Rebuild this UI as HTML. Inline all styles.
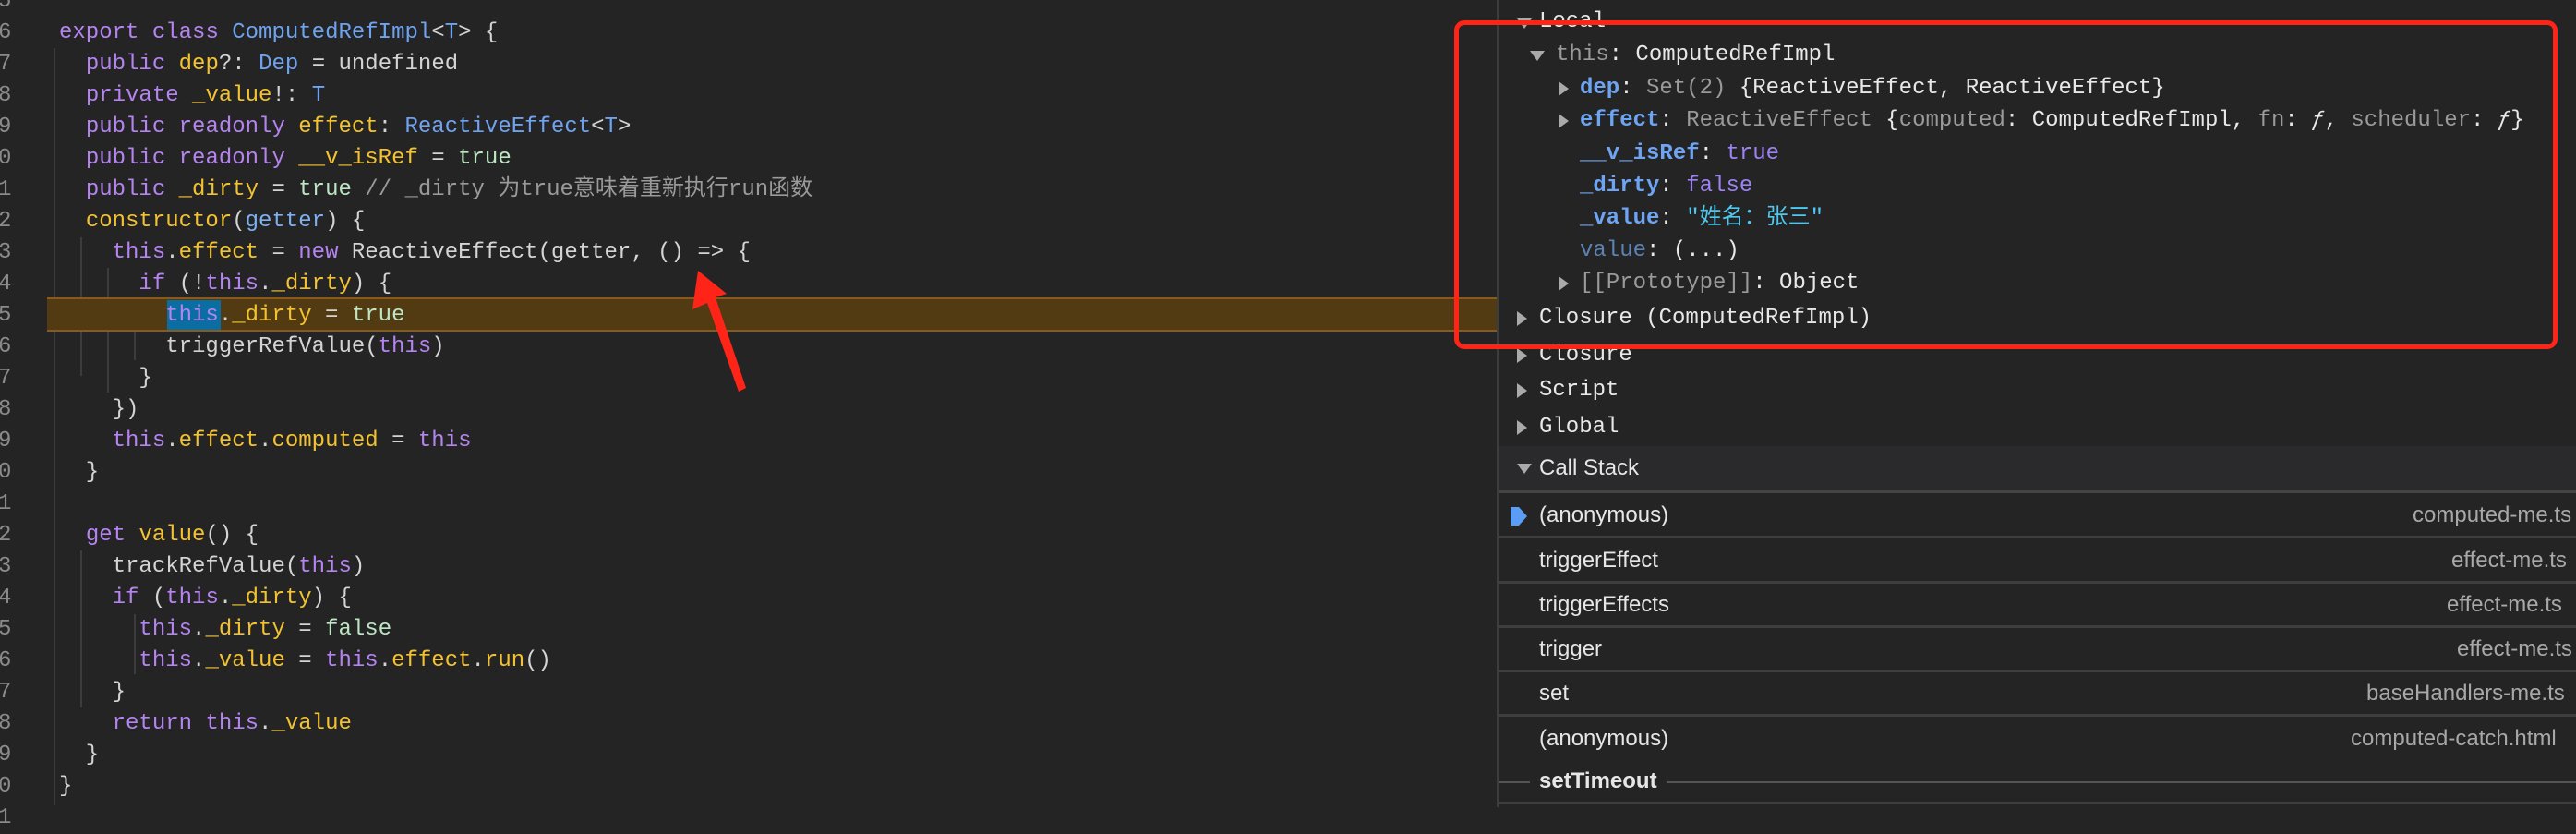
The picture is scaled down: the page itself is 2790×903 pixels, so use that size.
<!DOCTYPE html>
<html><head><meta charset="utf-8">
<style>
html,body{margin:0;padding:0;}
body{width:2790px;height:874px;overflow:hidden;background:#242424;position:relative;font-family:"Liberation Mono","Noto Sans CJK SC",monospace;}
.l{position:absolute;left:64px;white-space:pre;font-size:24px;line-height:34px;color:#d4d4d4;}
.n{position:absolute;left:-2px;width:14px;text-align:right;font-size:24px;line-height:34px;color:#8a8a8a;font-family:"Liberation Mono",monospace;}
.k{color:#b584f0}.c{color:#6fa3f0}.p{color:#f2c233}.g{color:#bde6c4}.cm{color:#9a9a9a}.pa{color:#7fb0f0}
.gd{position:absolute;width:2px;background:#3c3c3c;}
#right{position:absolute;left:1621px;top:0;width:1169px;height:874px;background:#242424;border-left:2px solid #3d3d3d;}
.r{position:absolute;white-space:pre;font-size:24px;line-height:34px;color:#e8e8e8;}
.tri{position:absolute;width:0;height:0;}
.tr{border-top:8px solid transparent;border-bottom:8px solid transparent;border-left:11px solid #aaa;}
.td{border-left:8px solid transparent;border-right:8px solid transparent;border-top:11px solid #aaa;}
.kb{color:#6ea4f2;font-weight:bold}.gr{color:#9a9a9a}.pu{color:#9d83f2}.cy{color:#4fc8f0}.dv{color:#5d82b4}
.cs{position:absolute;font-family:"Liberation Sans",sans-serif;font-size:24px;line-height:34px;color:#e6e6e6;white-space:pre;}
.fn{color:#a8a8a8}
.sep{position:absolute;left:1623px;width:1167px;height:3px;background:#3e3e3e;}
</style></head><body>

<div class="gd" style="left:58px;top:52px;height:820px"></div>
<div class="gd" style="left:87px;top:257px;height:150px"></div>
<div class="gd" style="left:87px;top:596px;height:170px"></div>
<div class="gd" style="left:116px;top:290px;height:135px"></div>
<div class="gd" style="left:145px;top:360px;height:30px"></div>
<div class="gd" style="left:145px;top:665px;height:65px"></div>

<div style="position:absolute;left:51px;top:322px;width:1570px;height:33px;background:#523a12;border-top:2px solid #8c5a18;border-bottom:2px solid #8c5a18;"></div>
<div style="position:absolute;left:181px;top:325px;width:58px;height:32px;background:#0b6ea3;"></div>

<div class="n" style="top:-15px">5</div>
<div class="n" style="top:19px">6</div><div class="l" style="top:19px"><span class="k">export</span> <span class="k">class</span> <span class="c">ComputedRefImpl</span>&lt;<span class="c">T</span>&gt; {</div>
<div class="n" style="top:53px">7</div><div class="l" style="top:53px">  <span class="k">public</span> <span class="p">dep</span>?: <span class="c">Dep</span> = undefined</div>
<div class="n" style="top:87px">8</div><div class="l" style="top:87px">  <span class="k">private</span> <span class="p">_value</span>!: <span class="c">T</span></div>
<div class="n" style="top:121px">9</div><div class="l" style="top:121px">  <span class="k">public</span> <span class="k">readonly</span> <span class="p">effect</span>: <span class="c">ReactiveEffect</span>&lt;<span class="c">T</span>&gt;</div>
<div class="n" style="top:155px">0</div><div class="l" style="top:155px">  <span class="k">public</span> <span class="k">readonly</span> <span class="p">__v_isRef</span> = <span class="g">true</span></div>
<div class="n" style="top:189px">1</div><div class="l" style="top:189px">  <span class="k">public</span> <span class="p">_dirty</span> = <span class="g">true</span> <span class="cm">// _dirty 为true意味着重新执行run函数</span></div>
<div class="n" style="top:223px">2</div><div class="l" style="top:223px">  <span class="p">constructor</span>(<span class="pa">getter</span>) {</div>
<div class="n" style="top:257px">3</div><div class="l" style="top:257px">    <span class="k">this</span>.<span class="p">effect</span> = <span class="k">new</span> ReactiveEffect(getter, () =&gt; {</div>
<div class="n" style="top:291px">4</div><div class="l" style="top:291px">      <span class="k">if</span> (!<span class="k">this</span>.<span class="p">_dirty</span>) {</div>
<div class="n" style="top:325px">5</div><div class="l" style="top:325px">        <span class="k">this</span>.<span class="p">_dirty</span> = <span class="g">true</span></div>
<div class="n" style="top:359px">6</div><div class="l" style="top:359px">        triggerRefValue(<span class="k">this</span>)</div>
<div class="n" style="top:393px">7</div><div class="l" style="top:393px">      }</div>
<div class="n" style="top:427px">8</div><div class="l" style="top:427px">    })</div>
<div class="n" style="top:461px">9</div><div class="l" style="top:461px">    <span class="k">this</span>.<span class="p">effect</span>.<span class="p">computed</span> = <span class="k">this</span></div>
<div class="n" style="top:495px">0</div><div class="l" style="top:495px">  }</div>
<div class="n" style="top:529px">1</div>
<div class="n" style="top:563px">2</div><div class="l" style="top:563px">  <span class="k">get</span> <span class="p">value</span>() {</div>
<div class="n" style="top:597px">3</div><div class="l" style="top:597px">    trackRefValue(<span class="k">this</span>)</div>
<div class="n" style="top:631px">4</div><div class="l" style="top:631px">    <span class="k">if</span> (<span class="k">this</span>.<span class="p">_dirty</span>) {</div>
<div class="n" style="top:665px">5</div><div class="l" style="top:665px">      <span class="k">this</span>.<span class="p">_dirty</span> = <span class="g">false</span></div>
<div class="n" style="top:699px">6</div><div class="l" style="top:699px">      <span class="k">this</span>.<span class="p">_value</span> = <span class="k">this</span>.<span class="p">effect</span>.<span class="p">run</span>()</div>
<div class="n" style="top:733px">7</div><div class="l" style="top:733px">    }</div>
<div class="n" style="top:767px">8</div><div class="l" style="top:767px">    <span class="k">return</span> <span class="k">this</span>.<span class="p">_value</span></div>
<div class="n" style="top:801px">9</div><div class="l" style="top:801px">  }</div>
<div class="n" style="top:835px">0</div><div class="l" style="top:835px">}</div>
<div class="n" style="top:869px">1</div>

<svg style="position:absolute;left:0;top:0" width="1621" height="874"><polygon points="756,293 787,318 775,322 808,420 800,424 766,328 750,335" fill="#ff2418"/></svg>

<div id="right"></div>
<div class="tri td" style="left:1643px;top:20px"></div><div class="r" style="left:1667px;top:7px">Local</div>
<div class="tri td" style="left:1657px;top:55px"></div><div class="r" style="left:1685px;top:43px"><span class="gr">this</span>: ComputedRefImpl</div>
<div class="tri tr" style="left:1688px;top:88px"></div><div class="r" style="left:1711px;top:79px"><span class="kb">dep</span>: <span class="gr">Set(2)</span> {ReactiveEffect, ReactiveEffect}</div>
<div class="tri tr" style="left:1688px;top:123px"></div><div class="r" style="left:1711px;top:114px"><span class="kb">effect</span>: <span class="gr">ReactiveEffect</span> {<span class="gr">computed</span>: ComputedRefImpl, <span class="gr">fn</span>: <i>ƒ</i>, <span class="gr">scheduler</span>: <i>ƒ</i>}</div>
<div class="r" style="left:1711px;top:150px"><span class="kb">__v_isRef</span>: <span class="pu">true</span></div>
<div class="r" style="left:1711px;top:185px"><span class="kb">_dirty</span>: <span class="pu">false</span></div>
<div class="r" style="left:1711px;top:220px"><span class="kb">_value</span>: <span class="cy">"姓名：张三"</span></div>
<div class="r" style="left:1711px;top:255px"><span class="dv">value</span>: (...)</div>
<div class="tri tr" style="left:1688px;top:299px"></div><div class="r" style="left:1711px;top:290px"><span class="gr">[[Prototype]]</span>: Object</div>
<div class="tri tr" style="left:1643px;top:337px"></div><div class="r" style="left:1667px;top:328px">Closure (ComputedRefImpl)</div>
<div class="tri tr" style="left:1643px;top:377px"></div><div class="r" style="left:1667px;top:368px">Closure</div>
<div class="tri tr" style="left:1643px;top:415px"></div><div class="r" style="left:1667px;top:406px">Script</div>
<div class="tri tr" style="left:1643px;top:455px"></div><div class="r" style="left:1667px;top:446px">Global</div>

<div style="position:absolute;left:1623px;top:483px;width:1167px;height:47px;background:#2a2a2c;"></div>
<div class="sep" style="top:530px;height:4px;background:#444"></div>
<div class="tri td" style="left:1643px;top:502px"></div><div class="cs" style="left:1667px;top:490px">Call Stack</div>

<svg style="position:absolute;left:1636px;top:546px" width="20" height="26"><polygon points="0,3 9,3 18,13 9,23 0,23" fill="#5b9cf5"/></svg>
<div class="cs" style="left:1667px;top:541px">(anonymous)</div><div class="cs fn" style="left:2613px;top:541px">computed-me.ts</div>
<div class="sep" style="top:580px"></div>
<div class="cs" style="left:1667px;top:590px">triggerEffect</div><div class="cs fn" style="left:2655px;top:590px">effect-me.ts</div>
<div class="sep" style="top:629px"></div>
<div class="cs" style="left:1667px;top:638px">triggerEffects</div><div class="cs fn" style="left:2650px;top:638px">effect-me.ts</div>
<div class="sep" style="top:677px"></div>
<div class="cs" style="left:1667px;top:686px">trigger</div><div class="cs fn" style="left:2661px;top:686px">effect-me.ts</div>
<div class="sep" style="top:725px"></div>
<div class="cs" style="left:1667px;top:734px">set</div><div class="cs fn" style="left:2563px;top:734px">baseHandlers-me.ts</div>
<div class="sep" style="top:773px"></div>
<div class="cs" style="left:1667px;top:783px">(anonymous)</div><div class="cs fn" style="left:2546px;top:783px">computed-catch.html</div>
<div class="sep" style="top:846px;height:2px;background:#555"></div>
<div class="cs" style="left:1657px;top:829px;padding:0 10px;background:#242424;font-weight:bold;">setTimeout</div>
<div class="sep" style="top:868px"></div>

<div style="position:absolute;left:1575px;top:22px;width:1185px;height:346px;border:5px solid #ff2418;border-radius:11px;"></div>
</body></html>
